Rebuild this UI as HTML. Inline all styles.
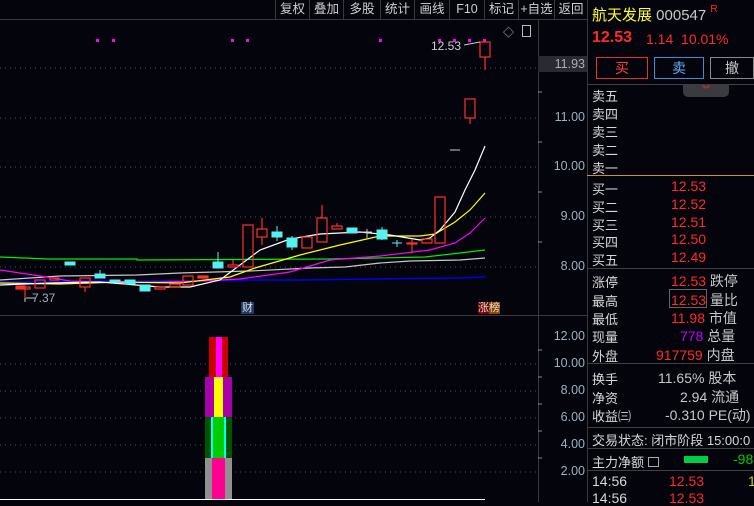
<!DOCTYPE html>
<html><head><meta charset="utf-8"><style>
*{margin:0;padding:0;box-sizing:border-box}
body{width:754px;height:502px;background:#04040c;overflow:hidden;position:relative;font-family:"Liberation Sans","Noto Sans CJK SC",sans-serif;color:#c8c8c8;font-size:13px}
.a{position:absolute;white-space:nowrap}
.tb{position:absolute;top:0;height:19px;line-height:19px;text-align:center;font-size:12.5px;color:#d0d0d0;border-left:1px solid #3a3a3a}
.r{color:#ff2a2a}
.lbl{position:absolute;left:592px;font-size:13px;color:#d8d8d8;white-space:nowrap}
.hl{position:absolute;left:587px;width:167px;height:1px;background:#404040}
.ax{position:absolute;left:540px;width:45px;text-align:right;font-size:12.5px;color:#a0b0c0}
</style></head><body>
<div class="a" style="left:0;top:19px;width:587px;height:1px;background:#3a3a3a"></div>
<div class="tb" style="left:275px;width:34px">复权</div>
<div class="tb" style="left:309px;width:34px">叠加</div>
<div class="tb" style="left:343px;width:37px">多股</div>
<div class="tb" style="left:380px;width:34px">统计</div>
<div class="tb" style="left:414px;width:35px">画线</div>
<div class="tb" style="left:449px;width:35px">F10</div>
<div class="tb" style="left:484px;width:34px">标记</div>
<div class="tb" style="left:518px;width:36px">+自选</div>
<div class="tb" style="left:554px;width:33px">返回</div>
<div class="a" style="left:538px;top:20px;width:1px;height:482px;background:#3a3a3a"></div>
<div class="a" style="left:587px;top:0;width:1px;height:502px;background:#3a3a3a"></div>
<div class="a" style="left:0;top:315px;width:587px;height:1px;background:#3a3a3a"></div>
<svg class="a" style="left:0;top:0" width="587" height="502">
<g stroke="#555" stroke-dasharray="1,4">
<line x1="0" y1="68" x2="536" y2="68"/><line x1="0" y1="118" x2="536" y2="118"/><line x1="0" y1="167" x2="536" y2="167"/><line x1="0" y1="217" x2="536" y2="217"/><line x1="0" y1="267" x2="536" y2="267"/>
<line x1="0" y1="364" x2="536" y2="364"/><line x1="0" y1="391" x2="536" y2="391"/><line x1="0" y1="418" x2="536" y2="418"/><line x1="0" y1="445" x2="536" y2="445"/><line x1="0" y1="472" x2="536" y2="472"/>
</g>
<g stroke="#888"><line x1="538" y1="92" x2="542" y2="92"/><line x1="538" y1="142" x2="542" y2="142"/><line x1="538" y1="192" x2="542" y2="192"/><line x1="538" y1="242" x2="542" y2="242"/><line x1="538" y1="350" x2="542" y2="350"/><line x1="538" y1="377" x2="542" y2="377"/><line x1="538" y1="404" x2="542" y2="404"/><line x1="538" y1="431" x2="542" y2="431"/><line x1="538" y1="458" x2="542" y2="458"/></g>
<g fill="#ff00ff"><rect x="96" y="39" width="3" height="3"/><rect x="112" y="39" width="3" height="3"/><rect x="231" y="39" width="3" height="3"/><rect x="246" y="39" width="3" height="3"/><rect x="379" y="39" width="3" height="3"/><rect x="438" y="39" width="3" height="3"/><rect x="453" y="39" width="3" height="3"/><rect x="468" y="39" width="3" height="3"/><rect x="483" y="39" width="3" height="3"/></g>
<polyline fill="none" stroke="#00ee00" stroke-width="1.2" points="0,257 48,259 137,259 137,260 330,259 425,257 460,253 485,250"/>
<polyline fill="none" stroke="#c8c8c8" stroke-width="1.2" points="0,280 60,276 137,275 180,273 250,271 310,268 345,267 380,263 410,261 460,260 485,258"/>
<polyline fill="none" stroke="#0000ee" stroke-width="1.5" points="0,282 100,281 200,281 255,280 300,280 375,279 460,278 485,277"/>
<polyline fill="none" stroke="#ff00ff" stroke-width="1.2" points="0,270 40,276 70,281 120,283 200,281 240,279 290,272 330,260 380,256 430,250 455,243 470,233 485,218"/>
<polyline fill="none" stroke="#ffff00" stroke-width="1.2" points="0,283 60,284 120,282 180,283 230,277 255,268 300,255 340,245 380,236 420,236 435,234 455,222 470,210 485,193"/>
<polyline fill="none" stroke="#ffffff" stroke-width="1.2" points="0,285 50,283 100,282 160,287 190,287 220,280 240,265 260,250 290,239 320,234 360,232 390,235 420,240 430,238 440,230 455,212 465,190 475,170 485,146"/>
<g stroke="#ff3030" fill="none" stroke-width="1.2">
<rect x="16" y="286" width="9" height="3" fill="#ff3030"/>
<rect x="21" y="287" width="9" height="2"/><line x1="25" y1="289" x2="25" y2="300"/>
<rect x="35" y="280" width="10" height="8"/>
<rect x="50" y="278" width="9" height="2"/>
<rect x="80" y="278" width="10" height="9"/><line x1="85" y1="287" x2="85" y2="292"/>
<rect x="155" y="287" width="10" height="2"/>
<rect x="170" y="284" width="10" height="3"/>
<rect x="183" y="276" width="10" height="9"/>
<rect x="198" y="276" width="10" height="2" fill="#ff3030"/>
<rect x="228" y="265" width="10" height="2"/><line x1="233" y1="260" x2="233" y2="265"/>
<rect x="243" y="225" width="10" height="42"/>
<rect x="257" y="229" width="10" height="8"/><line x1="262" y1="218" x2="262" y2="229"/><line x1="262" y1="237" x2="262" y2="245"/>
<rect x="302" y="237" width="10" height="11"/>
<rect x="317" y="218" width="10" height="24"/><line x1="322" y1="205" x2="322" y2="218"/>
<rect x="332" y="226" width="10" height="3"/><line x1="337" y1="223" x2="337" y2="226"/>
<rect x="407" y="243" width="10" height="1" fill="#ff3030"/><line x1="412" y1="239" x2="412" y2="253"/>
<rect x="422" y="239" width="10" height="4"/>
<rect x="435" y="197" width="10" height="46"/>
<rect x="465" y="99" width="10" height="19"/><line x1="470" y1="118" x2="470" y2="124"/>
<rect x="480" y="42" width="10" height="15"/><line x1="485" y1="57" x2="485" y2="70"/>
</g>
<g fill="#55f0f0" stroke="#55f0f0">
<rect x="65" y="262" width="10" height="3"/>
<rect x="95" y="274" width="10" height="4"/><line x1="100" y1="270" x2="100" y2="278"/>
<rect x="110" y="280" width="10" height="2"/>
<rect x="125" y="280" width="10" height="4"/>
<rect x="140" y="285" width="10" height="6"/>
<rect x="213" y="262" width="10" height="6"/><line x1="218" y1="252" x2="218" y2="262"/>
<rect x="272" y="232" width="10" height="5"/><line x1="277" y1="226" x2="277" y2="241"/>
<rect x="287" y="238" width="10" height="9"/><line x1="292" y1="236" x2="292" y2="250"/>
<rect x="347" y="228" width="10" height="5"/>
<rect x="377" y="230" width="10" height="9"/><line x1="382" y1="227" x2="382" y2="240"/>
<line x1="392" y1="243" x2="402" y2="243"/><line x1="397" y1="240" x2="397" y2="247"/>
</g>
<g stroke="#ccc"><line x1="362" y1="232" x2="372" y2="232"/><line x1="367" y1="229" x2="367" y2="238"/><line x1="450" y1="150" x2="460" y2="150"/>
<line x1="25" y1="298" x2="25" y2="302"/><line x1="26" y1="298" x2="35" y2="298"/><line x1="464" y1="45" x2="480" y2="42"/></g>
<rect x="209" y="337" width="19" height="40" fill="#cc0000"/><rect x="216" y="337" width="6" height="40" fill="#ff00ff"/>
<rect x="205" y="377" width="27" height="40" fill="#aa00aa"/><rect x="214" y="377" width="9" height="40" fill="#ffff00"/>
<rect x="205" y="417" width="27" height="41" fill="#005500"/><rect x="211" y="417" width="15" height="41" fill="#00cc00"/><rect x="211" y="417" width="2" height="41" fill="#00ffff"/><rect x="224" y="417" width="2" height="41" fill="#00ffff"/>
<rect x="205" y="458" width="27" height="42" fill="#909090"/><rect x="212" y="458" width="13" height="42" fill="#ff0090"/>
<line x1="0" y1="499.5" x2="485" y2="499.5" stroke="#fff"/>
</svg>
<div class="a" style="left:32px;top:291px;font-size:12px;color:#a0b0c0">7.37</div>
<div class="a" style="left:431px;top:39px;font-size:12px;color:#d0d0d0">12.53</div>
<div class="a" style="left:503px;top:24px;font-size:11px;color:#bbb">◇</div>
<div class="a" style="left:522px;top:25px;width:9px;height:12px;border:1px solid #bbb"></div>
<div class="a" style="left:241px;top:302px;font-size:11px;line-height:12px;background:#1d3a66;color:#ddd;padding:0 1px">财</div>
<div class="a" style="left:478px;top:302px;font-size:11px;line-height:12px;color:#ddd"><span style="background:#700">涨</span><span style="background:#884400">榜</span></div>
<div class="a" style="left:538px;top:56px;width:49px;height:16px;background:#2a2a30"></div>
<div class="ax" style="top:57px">11.93</div>
<div class="ax" style="top:110px">11.00</div>
<div class="ax" style="top:159px">10.00</div>
<div class="ax" style="top:209px">9.00</div>
<div class="ax" style="top:259px">8.00</div>
<div class="ax" style="top:329px">12.00</div>
<div class="ax" style="top:356px">10.00</div>
<div class="ax" style="top:383px">8.00</div>
<div class="ax" style="top:410px">6.00</div>
<div class="ax" style="top:437px">4.00</div>
<div class="ax" style="top:464px">2.00</div>
<div class="a" style="left:592px;top:4px;font-size:15px;color:#ffff30">航天发展 <span style="color:#c8c8c8">000547</span> <span style="color:#ff3030;font-size:10px;vertical-align:top">R</span></div>
<div class="a" style="left:592px;top:29px;font-size:16px;color:#ff2a2a;font-weight:bold">12.53</div>
<div class="a" style="left:646px;top:31px;font-size:14px;color:#ff2a2a">1.14 &nbsp;10.01%</div>
<div class="a" style="left:596px;top:57px;width:52px;height:22px;border:1px solid #e03030;color:#ff4040;text-align:center;line-height:20px;font-size:14px">买</div>
<div class="a" style="left:654px;top:57px;width:50px;height:22px;border:1px solid #3a90d0;color:#60b0ff;text-align:center;line-height:20px;font-size:14px">卖</div>
<div class="a" style="left:710px;top:57px;width:44px;height:22px;border:1px solid #888;color:#ccc;text-align:center;line-height:20px;font-size:14px">撤</div>
<div class="hl" style="top:84px"></div>
<div class="a" style="left:683px;top:84px;width:46px;height:13px;background:#3a3a40;border-radius:0 0 5px 5px;color:#f33;font-size:8px;text-align:center;line-height:12px">︾</div>
<div class="lbl" style="top:86px">卖五</div>
<div class="lbl" style="top:104px">卖四</div>
<div class="lbl" style="top:122px">卖三</div>
<div class="lbl" style="top:140px">卖二</div>
<div class="lbl" style="top:158px">卖一</div>
<div class="a" style="left:587px;top:175px;width:167px;height:1px;background:#d09030"></div>
<div class="lbl" style="top:179px">买一</div><div class="a r" style="left:671px;top:178px;font-size:14px">12.53</div>
<div class="lbl" style="top:197px">买二</div><div class="a r" style="left:671px;top:196px;font-size:14px">12.52</div>
<div class="lbl" style="top:215px">买三</div><div class="a r" style="left:671px;top:214px;font-size:14px">12.51</div>
<div class="lbl" style="top:232px">买四</div><div class="a r" style="left:671px;top:231px;font-size:14px">12.50</div>
<div class="lbl" style="top:250px">买五</div><div class="a r" style="left:671px;top:249px;font-size:14px">12.49</div>
<div class="hl" style="top:268px"></div>
<div class="lbl" style="top:272px">涨停</div><div class="a" style="left:671px;top:271px;font-size:14px"><span class="r">12.53</span> 跌停</div>
<div class="lbl" style="top:291px">最高</div><div class="a" style="left:669px;top:289px;width:38px;height:19px;border:1px solid #666"></div><div class="a" style="left:671px;top:290px;font-size:14px"><span class="r">12.53</span> 量比</div>
<div class="lbl" style="top:309px">最低</div><div class="a" style="left:671px;top:308px;font-size:14px"><span class="r">11.98</span> 市值</div>
<div class="lbl" style="top:327px">现量</div><div class="a" style="left:680px;top:326px;font-size:14px"><span style="color:#c000ff">778</span> 总量</div>
<div class="lbl" style="top:346px">外盘</div><div class="a" style="left:656px;top:345px;font-size:14px"><span class="r">917759</span> 内盘</div>
<div class="hl" style="top:363px"></div>
<div class="lbl" style="top:369px">换手</div><div class="a" style="left:658px;top:368px;font-size:14px">11.65% 股本</div>
<div class="lbl" style="top:388px">净资</div><div class="a" style="left:680px;top:387px;font-size:14px">2.94 流通</div>
<div class="lbl" style="top:406px">收益㈢</div><div class="a" style="left:665px;top:405px;font-size:14px">-0.310 PE(动)</div>
<div class="hl" style="top:427px"></div>
<div class="lbl" style="top:430px;font-size:13px">交易状态: 闭市阶段 15:00:0</div>
<div class="hl" style="top:448px"></div>
<div class="lbl" style="top:452px">主力净额 <span style="display:inline-block;width:11px;height:10px;border:1px solid #aaa"></span></div>
<div class="a" style="left:684px;top:456px;width:24px;height:7px;background:#00cc44"></div>
<div class="a" style="left:733px;top:451px;font-size:14px;color:#00cc00">-98</div>
<div class="hl" style="top:470px"></div>
<div class="lbl" style="top:473px;font-size:14px">14:56</div><div class="a r" style="left:669px;top:473px;font-size:14px">12.53</div><div class="a" style="left:748px;top:473px;font-size:14px;color:#cccc00">1</div>
<div class="lbl" style="top:490px;font-size:14px">14:56</div><div class="a r" style="left:669px;top:490px;font-size:14px">12.53</div>
</body></html>
